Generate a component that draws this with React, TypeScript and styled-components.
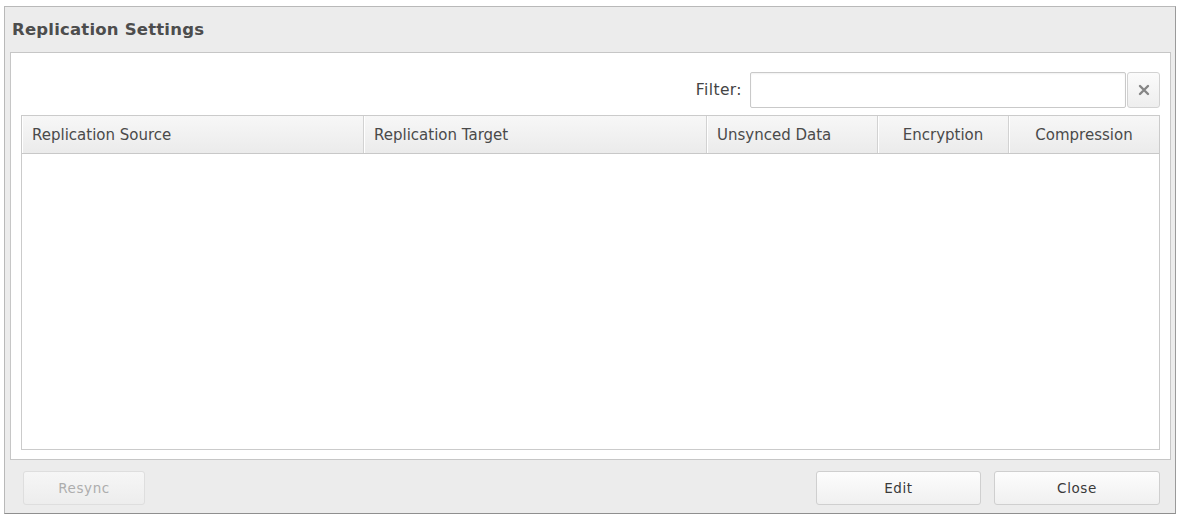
import styled, { createGlobalStyle } from "styled-components";

const GlobalStyle = createGlobalStyle`
  html, body {
    margin: 0;
    padding: 0;
    background: #ffffff;
  }
  body {
    font-family: "DejaVu Sans", "Liberation Sans", sans-serif;
  }
`;

const Dialog = styled.div`
  margin: 6px 4px 0 4px;
  width: 1172px;
  height: 508px;
  box-sizing: border-box;
  border: 1px solid #b9b9b9;
  border-right-color: #9a9a9a;
  border-bottom-color: #8f8f8f;
  background: #ececec;
  display: flex;
  flex-direction: column;
`;

const TitleBar = styled.div`
  height: 45px;
  padding-left: 7px;
  display: flex;
  align-items: center;
  font-size: 16.5px;
  font-weight: bold;
  color: #4d4d4d;
  letter-spacing: 0.2px;
`;

const Panel = styled.div`
  margin: 0 4px 0 5px;
  height: 408px;
  box-sizing: border-box;
  background: #ffffff;
  border: 1px solid #c6c6c6;
  padding: 19px 10px 9px 10px;
  display: flex;
  flex-direction: column;
`;

const FilterRow = styled.div`
  display: flex;
  justify-content: flex-end;
  align-items: center;
  height: 36px;
`;

const FilterLabel = styled.label`
  font-size: 15.5px;
  color: #444;
  letter-spacing: 0.4px;
  margin-right: 8px;
`;

const FilterInput = styled.input`
  width: 376px;
  height: 36px;
  box-sizing: border-box;
  border: 1px solid #c9c9c9;
  border-radius: 2px;
  background: #ffffff;
  box-shadow: inset 0 1px 2px rgba(0, 0, 0, 0.06);
  outline: none;
`;

const ClearButton = styled.button`
  width: 33px;
  height: 36px;
  margin-left: 1px;
  box-sizing: border-box;
  border: 1px solid #d2d2d2;
  border-radius: 3px;
  background: linear-gradient(#fbfbfb, #eeeeee);
  color: #8a8a8a;
  padding: 0;
  display: flex;
  align-items: center;
  justify-content: center;
`;

const Table = styled.div`
  margin-top: 7px;
  flex: 1;
  border: 1px solid #cbcbcb;
  display: flex;
  flex-direction: column;
`;

const HeaderRow = styled.div`
  display: grid;
  grid-template-columns: 342px 343px 171px 131px 1fr;
  height: 37px;
  background: linear-gradient(#f7f7f7, #ebebeb);
  border-bottom: 1px solid #c8c8c8;
`;

const HeaderCell = styled.div<{ $center?: boolean }>`
  display: flex;
  align-items: center;
  justify-content: ${({ $center }) => ($center ? "center" : "flex-start")};
  padding-left: ${({ $center }) => ($center ? "0" : "10px")};
  font-size: 15px;
  color: #4a4a4a;
  border-right: 1px solid #d2d2d2;
  box-shadow: inset 1px 0 0 #ffffff;
  &:last-child {
    border-right: none;
  }
`;

const TableBody = styled.div`
  flex: 1;
  background: #ffffff;
`;

const Footer = styled.div`
  flex: 1;
  display: flex;
  align-items: flex-start;
  padding: 11px 15px 0 18px;
  gap: 13px;
`;

const Button = styled.button<{ $width: number; $push?: boolean }>`
  width: ${({ $width }) => $width}px;
  height: 34px;
  margin-left: ${({ $push }) => ($push ? "auto" : "0")};
  box-sizing: border-box;
  border: 1px solid #cfcfcf;
  border-radius: 3px;
  background: linear-gradient(#fdfdfd, #f0f0f0);
  color: #3a3a3a;
  font-family: "DejaVu Sans", sans-serif;
  font-size: 13.5px;
  letter-spacing: 0.6px;
  &:disabled {
    color: #adadad;
    border-color: #dedede;
    background: linear-gradient(#f6f6f6, #ededed);
  }
`;

const columns = [
  { label: "Replication Source" },
  { label: "Replication Target" },
  { label: "Unsynced Data" },
  { label: "Encryption", center: true },
  { label: "Compression", center: true },
];

export default function App() {
  return (
    <>
      <GlobalStyle />
      <Dialog>
        <TitleBar>Replication Settings</TitleBar>
        <Panel>
          <FilterRow>
            <FilterLabel>Filter:</FilterLabel>
            <FilterInput />
            <ClearButton aria-label="Clear filter">
              <svg width="12" height="12" viewBox="0 0 12 12">
                <path
                  d="M2 2 L10 10 M10 2 L2 10"
                  stroke="#858585"
                  strokeWidth="2.4"
                  strokeLinecap="round"
                />
              </svg>
            </ClearButton>
          </FilterRow>
          <Table>
            <HeaderRow>
              {columns.map((c) => (
                <HeaderCell key={c.label} $center={c.center}>
                  {c.label}
                </HeaderCell>
              ))}
            </HeaderRow>
            <TableBody />
          </Table>
        </Panel>
        <Footer>
          <Button $width={122} disabled>
            Resync
          </Button>
          <Button $width={165} $push>
            Edit
          </Button>
          <Button $width={166}>Close</Button>
        </Footer>
      </Dialog>
    </>
  );
}
